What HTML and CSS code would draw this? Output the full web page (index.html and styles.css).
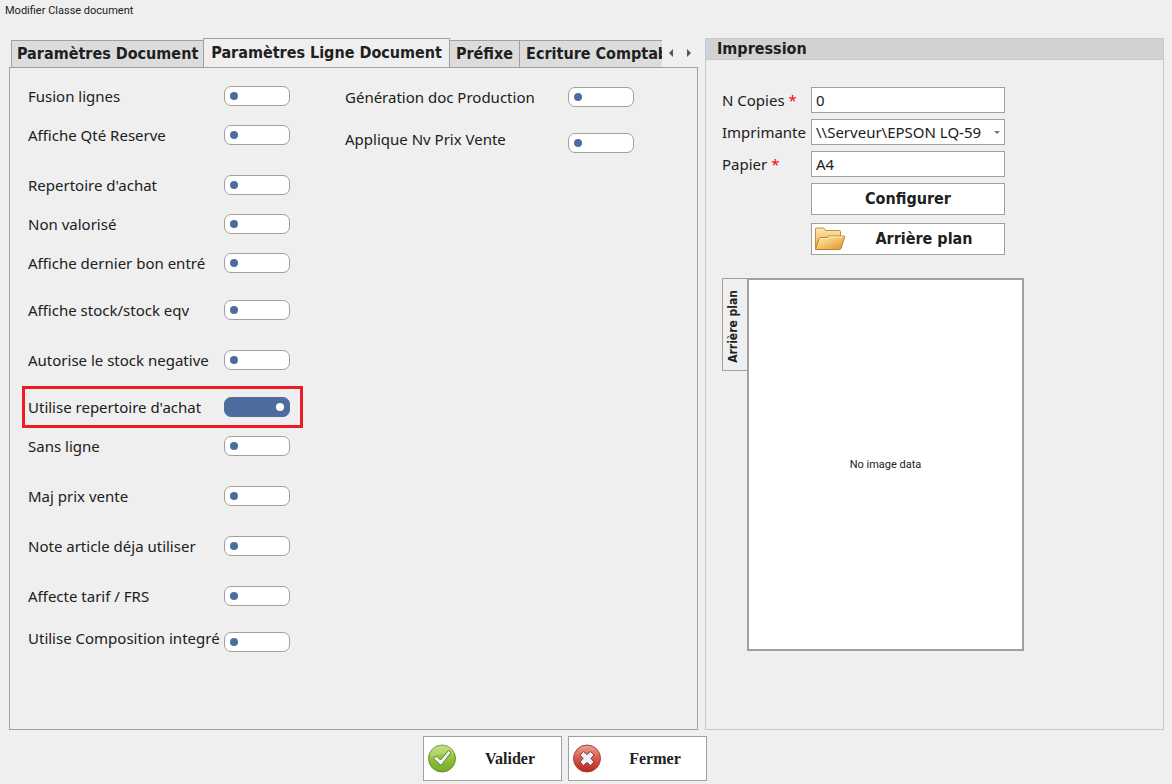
FILE: index.html
```
<!DOCTYPE html>
<html lang="fr">
<head>
<meta charset="utf-8">
<meta name="viewport" content="width=device-width, initial-scale=1">
<title>Modifier Classe document</title>
<link rel="stylesheet" href="styles.css">
</head>
<body>
<h1 class="title">Modifier Classe document</h1>
<form class="window">
  <main class="panels">
    <section class="tabs">
      <div class="tab-bar">
        <div class="tab-list" role="tablist">
          <button class="tab" type="button" role="tab" aria-selected="false">Paramètres Document</button>
          <button class="tab tab-active" type="button" role="tab" aria-selected="true">Paramètres Ligne Document</button>
          <button class="tab" type="button" role="tab" aria-selected="false">Préfixe</button>
          <button class="tab" type="button" role="tab" aria-selected="false">Ecriture Comptable</button>
        </div>
        <div class="tab-scroll">
          <button class="scroll-button" type="button" aria-label="Onglet précédent"><svg width="4" height="8" viewBox="0 0 4 8"><path d="M4 0v8L0 4z" fill="#555"/></svg></button>
          <button class="scroll-button" type="button" aria-label="Onglet suivant"><svg width="4" height="8" viewBox="0 0 4 8"><path d="M0 0v8l4-4z" fill="#555"/></svg></button>
        </div>
      </div>
      <div class="tab-page" role="tabpanel">
        <div class="options">
          <div class="option"><label for="o1">Fusion lignes</label><input class="switch" type="checkbox" id="o1"></div>
          <div class="option"><label for="o2">Affiche Qté Reserve</label><input class="switch" type="checkbox" id="o2"></div>
          <div class="option gap-large"><label for="o3">Repertoire d'achat</label><input class="switch" type="checkbox" id="o3"></div>
          <div class="option"><label for="o4">Non valorisé</label><input class="switch" type="checkbox" id="o4"></div>
          <div class="option"><label for="o5">Affiche dernier bon entré</label><input class="switch" type="checkbox" id="o5"></div>
          <div class="option gap-medium"><label for="o6">Affiche stock/stock eqv</label><input class="switch" type="checkbox" id="o6"></div>
          <div class="option gap-large"><label for="o7">Autorise le stock negative</label><input class="switch" type="checkbox" id="o7"></div>
          <div class="option gap-medium highlighted"><label for="o8">Utilise repertoire d'achat</label><input class="switch" type="checkbox" id="o8" checked></div>
          <div class="option"><label for="o9">Sans ligne</label><input class="switch" type="checkbox" id="o9"></div>
          <div class="option gap-large"><label for="o10">Maj prix vente</label><input class="switch" type="checkbox" id="o10"></div>
          <div class="option gap-large"><label for="o11">Note article déja utiliser</label><input class="switch" type="checkbox" id="o11"></div>
          <div class="option gap-large"><label for="o12">Affecte tarif / FRS</label><input class="switch" type="checkbox" id="o12"></div>
          <div class="option staggered"><label for="o13">Utilise Composition integré</label><input class="switch" type="checkbox" id="o13"></div>
        </div>
        <div class="options options-wide">
          <div class="option"><label for="o14">Génération doc Production</label><input class="switch" type="checkbox" id="o14"></div>
          <div class="option staggered"><label for="o15">Applique Nv Prix Vente</label><input class="switch" type="checkbox" id="o15"></div>
        </div>
      </div>
    </section>

    <section class="printing">
      <h2 class="printing-title">Impression</h2>
      <div class="fields">
        <label for="copies">N Copies <span class="required">*</span></label>
        <input class="field" id="copies" type="text" value="0">
        <label for="printer">Imprimante</label>
        <div class="select-wrap"><select class="field" id="printer"><option>\\Serveur\EPSON LQ-59</option></select></div>
        <label for="paper">Papier <span class="required">*</span></label>
        <input class="field" id="paper" type="text" value="A4">
        <button class="field-button" type="button">Configurer</button>
        <button class="field-button with-icon" type="button">
          <svg width="32" height="26" viewBox="0 0 32 26" aria-hidden="true">
            <defs>
              <linearGradient id="back" x1="0" y1="0" x2="0" y2="1"><stop offset="0" stop-color="#fdeab0"/><stop offset="1" stop-color="#e5a849"/></linearGradient>
              <linearGradient id="front" x1="0" y1="0" x2="1" y2="1"><stop offset="0" stop-color="#fff3bb"/><stop offset=".5" stop-color="#f2c36b"/><stop offset="1" stop-color="#db9130"/></linearGradient>
            </defs>
            <path d="M1.500 23V3q0-1 1-1h6.500q1 0 1.500 1l1 1.500H25.500q1 0 1 1V22z" fill="url(#back)" stroke="#cc8b3b"/>
            <path d="M1.500 23.500 5 12.500q.5-1 1.500-1h6.500l2-1.500h15q1 0 .6 1L27 22.500q-.4 1-1.500 1z" fill="url(#front)" stroke="#c67a25"/>
            <path d="M6 12.500h7.500l2-1.500h14" fill="none" stroke="#fff1c2"/>
          </svg>
          <span>Arrière plan</span>
        </button>
      </div>
      <div class="preview">
        <button class="preview-tab" type="button">Arrière plan</button>
        <div class="preview-page">No image data</div>
      </div>
    </section>
  </main>

  <footer class="actions">
    <button class="action" type="submit">
      <svg width="30" height="30" viewBox="0 0 30 30" aria-hidden="true">
        <defs><linearGradient id="green" x1="0" y1="0" x2="0" y2="1"><stop offset="0" stop-color="#b5d957"/><stop offset=".5" stop-color="#91c33a"/><stop offset="1" stop-color="#76ab26"/></linearGradient></defs>
        <circle cx="15" cy="14.500" r="13.500" fill="url(#green)" stroke="#5f8d2b"/>
        <path d="M3 13A12 12 0 0 1 27 10Q16 9 3 13z" fill="#fff" opacity=".2"/>
        <path d="M6.500 14.500 9.500 12l4 4L21.500 6.500l2.500 2L14 21.500z" fill="#f3f7fa" stroke="#5b7f39" stroke-linejoin="round"/>
      </svg>
      <span>Valider</span>
    </button>
    <button class="action" type="button">
      <svg width="30" height="30" viewBox="0 0 30 30" aria-hidden="true">
        <defs><linearGradient id="red" x1="0" y1="0" x2="0" y2="1"><stop offset="0" stop-color="#eea596"/><stop offset=".5" stop-color="#d6594b"/><stop offset="1" stop-color="#b92419"/></linearGradient></defs>
        <circle cx="15" cy="14.500" r="13.500" fill="url(#red)" stroke="#a93c35"/>
        <path d="M11.500 7.500 15 10.500l3.500-3 3.500 3.500-3 3.500 3 3.500-3.500 3.500-3.500-3-3.500 3L8 18l3-3.500L8 11z" fill="#edf1fa" stroke="#8d3934" stroke-linejoin="round"/>
      </svg>
      <span>Fermer</span>
    </button>
  </footer>
</form>
</body>
</html>
```
FILE: styles.css
```
* {
  box-sizing: border-box;
}

body {
  margin: 0;
  min-height: 100vh;
  display: flex;
  flex-direction: column;
  background: #efefef;
  color: #202020;
  font: 15px/20px "Noto Sans", sans-serif;
}

button,
input,
select {
  margin: 0;
  color: inherit;
  font: inherit;
}

.title {
  margin: 0;
  padding: 0 5px;
  font-family: Roboto, sans-serif;
  font-size: 11px;
  font-weight: 400;
  line-height: 22px;
}

.window {
  flex: 1;
  display: flex;
  flex-direction: column;
  padding: 16px 8px 3px 9px;
}

.panels {
  flex: 1;
  display: grid;
  grid-template-columns: 689fr 459fr;
  gap: 7px;
}

.tabs {
  min-width: 0;
  display: flex;
  flex-direction: column;
}

.tab-bar {
  display: flex;
  justify-content: space-between;
  padding-left: 2px;
  margin-bottom: -1px;
}

.tab-list {
  flex: 1;
  min-width: 0;
  display: flex;
  align-items: flex-end;
  overflow: hidden;
}

.tab,
.printing-title,
.field-button,
.preview-tab {
  font-family: "DejaVu Sans Condensed", sans-serif;
  font-size: 16px;
  font-weight: 700;
}

.tab {
  flex: none;
  height: 28px;
  padding: 0 5px;
  border: 1px solid #a0a0a0;
  background: #dcdcdc;
  white-space: nowrap;
}

.tab + .tab {
  margin-left: -1px;
}

.tab-active {
  height: 30px;
  padding: 0 7px;
  border-bottom-color: #efefef;
  background: #efefef;
}

.tab-active ~ .tab {
  padding: 0 6px;
}

.tab-scroll {
  flex: none;
  display: flex;
  width: 36px;
}

.scroll-button {
  flex: 1;
  display: grid;
  place-items: center;
  padding: 0;
  border: 0;
  background: none;
}

.tab-page {
  flex: 1;
  display: flex;
  align-items: flex-start;
  gap: 55px;
  padding: 18px;
  border: 1px solid #a0a0a0;
}

.options {
  width: 262px;
}

.options-wide {
  width: 289px;
  padding-top: 1px;
}

.option {
  position: relative;
  display: flex;
  justify-content: space-between;
  white-space: nowrap;
}

.option + .option {
  margin-top: 19px;
}

.option + .gap-medium {
  margin-top: 27px;
}

.option + .gap-large {
  margin-top: 30px;
}

.option + .staggered {
  margin-top: 22px;
}

.staggered .switch {
  margin-top: 4px;
}

.highlighted::after {
  content: "";
  position: absolute;
  inset: -11px -13px -11px -6px;
  border: 3px solid #ed1c24;
  pointer-events: none;
}

.switch {
  flex: none;
  appearance: none;
  display: flex;
  align-items: center;
  width: 66px;
  height: 20px;
  padding: 0 5px;
  border: 1px solid #a0a0a0;
  border-radius: 7px;
  background: #fff;
}

.switch::before {
  content: "";
  width: 8px;
  height: 8px;
  border-radius: 50%;
  background: #4e6d9f;
}

.switch:checked {
  justify-content: flex-end;
  border-color: #4e6d9f;
  background: #4e6d9f;
}

.switch:checked::before {
  background: #fff;
}

.printing {
  min-width: 0;
  border: 1px solid #c8c8c8;
}

.printing-title {
  margin: 0;
  padding: 0 11px;
  border-bottom: 1px solid #c8c8c8;
  background: #d2d2d2;
  line-height: 20px;
}

.fields {
  display: grid;
  grid-template-columns: 89px 194px;
  align-items: center;
  row-gap: 6px;
  padding: 27px 16px 0;
  white-space: nowrap;
}

.required {
  color: #ff0000;
}

.field {
  width: 100%;
  height: 26px;
  padding: 0 4px;
  border: 1px solid #a0a0a0;
  border-radius: 0;
  background: #fff;
}

.select-wrap {
  position: relative;
  display: flex;
}

.select-wrap .field {
  appearance: none;
}

.select-wrap::after {
  content: "";
  position: absolute;
  top: 12px;
  right: 5px;
  border: 3px solid transparent;
  border-top-color: #777;
  border-bottom: 0;
  pointer-events: none;
}

.field-button {
  grid-column: 2;
  height: 32px;
  padding: 0 2px;
  border: 1px solid #a0a0a0;
  background: #fff;
}

.field-button + .field-button {
  margin-top: 2px;
}

.with-icon {
  display: flex;
  align-items: center;
}

.with-icon span {
  flex: 1;
}

.preview {
  display: flex;
  align-items: flex-start;
  padding: 23px 16px;
}

.preview-tab {
  height: 93px;
  width: 26px;
  margin-right: -1px;
  padding: 4px 8px 0 2px;
  border: 1px solid #a0a0a0;
  border-right: 0;
  background: #efefef;
  font-size: 12px;
  line-height: 14px;
  writing-mode: sideways-lr;
  white-space: nowrap;
}

.preview-page {
  width: 277px;
  aspect-ratio: 277 / 373;
  display: grid;
  place-items: center;
  border: 2px solid #a0a0a0;
  background: #fff;
  font-family: Roboto, sans-serif;
  font-size: 11px;
}

.actions {
  display: flex;
  justify-content: center;
  gap: 6px;
  padding: 6px 44px 0 0;
}

.action {
  display: flex;
  align-items: center;
  gap: 3px;
  width: 139px;
  height: 45px;
  padding: 0 0 0 3px;
  border: 1px solid #a0a0a0;
  background: #fff;
  font-family: "Liberation Serif", serif;
  font-size: 16px;
  font-weight: 700;
}

.action span {
  flex: 1;
}
```
